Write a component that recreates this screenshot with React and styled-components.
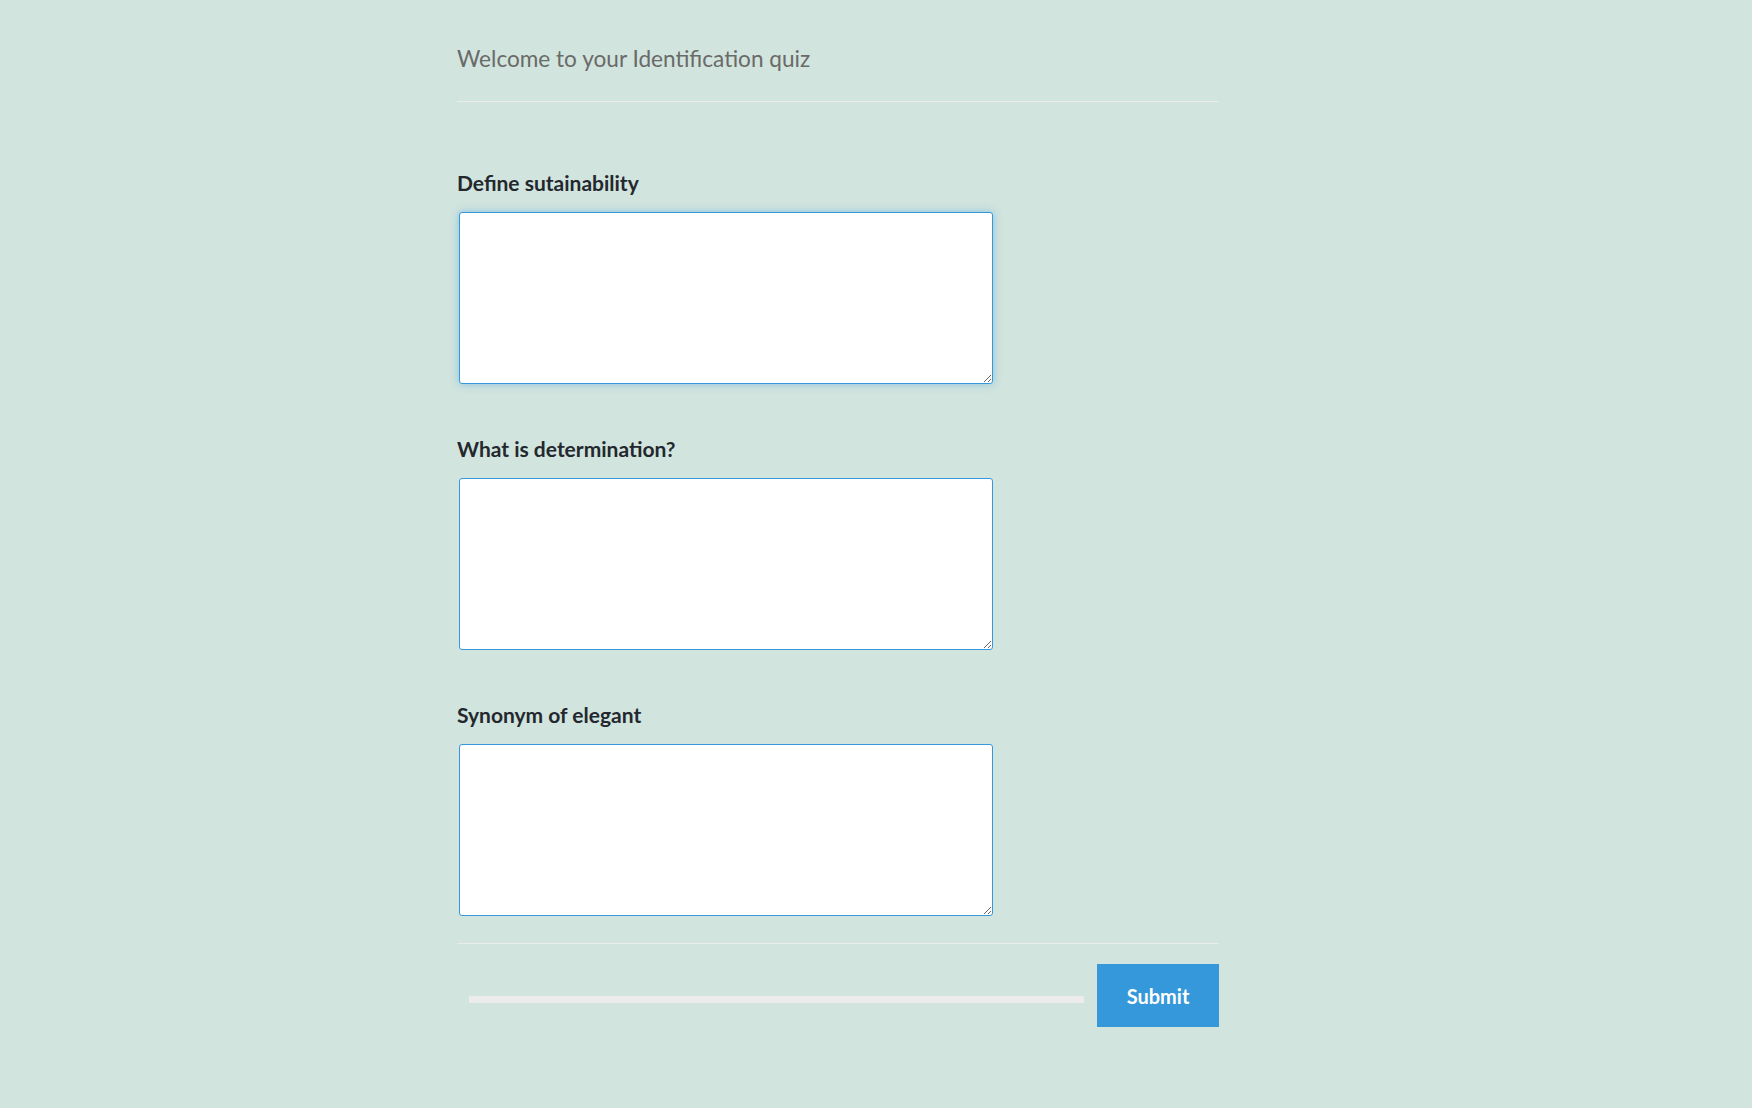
import * as React from 'react'
import styled, { createGlobalStyle } from 'styled-components'

const GlobalStyle = createGlobalStyle`
  html, body {
    margin: 0;
    padding: 0;
    background: #d1e4de;
  }
  body {
    font-family: Lato, 'Open Sans', sans-serif;
  }
`

const Page = styled.div`
  min-height: 100vh;
  box-sizing: border-box;
  padding: 44px 0 60px 457px;
`

const Quiz = styled.form`
  width: 762px;
`

const Header = styled.div`
  padding-bottom: 27px;
  border-bottom: 1px solid #e9ecea;
`

const Title = styled.h1`
  margin: 0;
  font-size: 22.6px;
  line-height: 30px;
  font-weight: 400;
  color: #6a6a68;
`

const Questions = styled.div`
  display: flex;
  flex-direction: column;
  gap: 53px;
  padding-top: 69px;
`

const Question = styled.div`
  display: flex;
  flex-direction: column;
  gap: 17px;
`

const Label = styled.label`
  font-size: 21px;
  line-height: 24px;
  font-weight: 700;
  color: #24282e;
`

const Answer = styled.textarea`
  box-sizing: border-box;
  width: 534px;
  height: 172px;
  margin: 0 0 0 2px;
  border: 1px solid #3498db;
  border-radius: 3px;
  background: #fff;
  outline: none;
  font-family: inherit;
  font-size: 16px;
  box-shadow: ${({ $active }) => ($active ? '0 0 8px rgba(52, 152, 219, 0.45)' : 'none')};
`

const Footer = styled.div`
  display: flex;
  align-items: center;
  gap: 13px;
  margin-top: 27px;
  padding: 20px 0 0 12px;
  border-top: 1px solid #e9ecea;
`

const Progress = styled.div`
  flex: 1;
  height: 7px;
  margin-top: 7px;
  background: #ececec;
`

const Submit = styled.button`
  width: 122px;
  height: 63px;
  border: none;
  border-radius: 0;
  background: #3498db;
  color: #fff;
  font-family: inherit;
  font-size: 20px;
  font-weight: 700;
  cursor: pointer;
`

const questions = [
  'Define sutainability',
  'What is determination?',
  'Synonym of elegant'
]

export default function App () {
  return (
    <>
      <GlobalStyle />
      <Page>
        <Quiz onSubmit={e => e.preventDefault()}>
          <Header>
            <Title>Welcome to your Identification quiz</Title>
          </Header>
          <Questions>
            {questions.map((q, i) => (
              <Question key={q}>
                <Label htmlFor={`q${i}`}>{q}</Label>
                <Answer id={`q${i}`} $active={i === 0} />
              </Question>
            ))}
          </Questions>
          <Footer>
            <Progress />
            <Submit type="submit">Submit</Submit>
          </Footer>
        </Quiz>
      </Page>
    </>
  )
}
